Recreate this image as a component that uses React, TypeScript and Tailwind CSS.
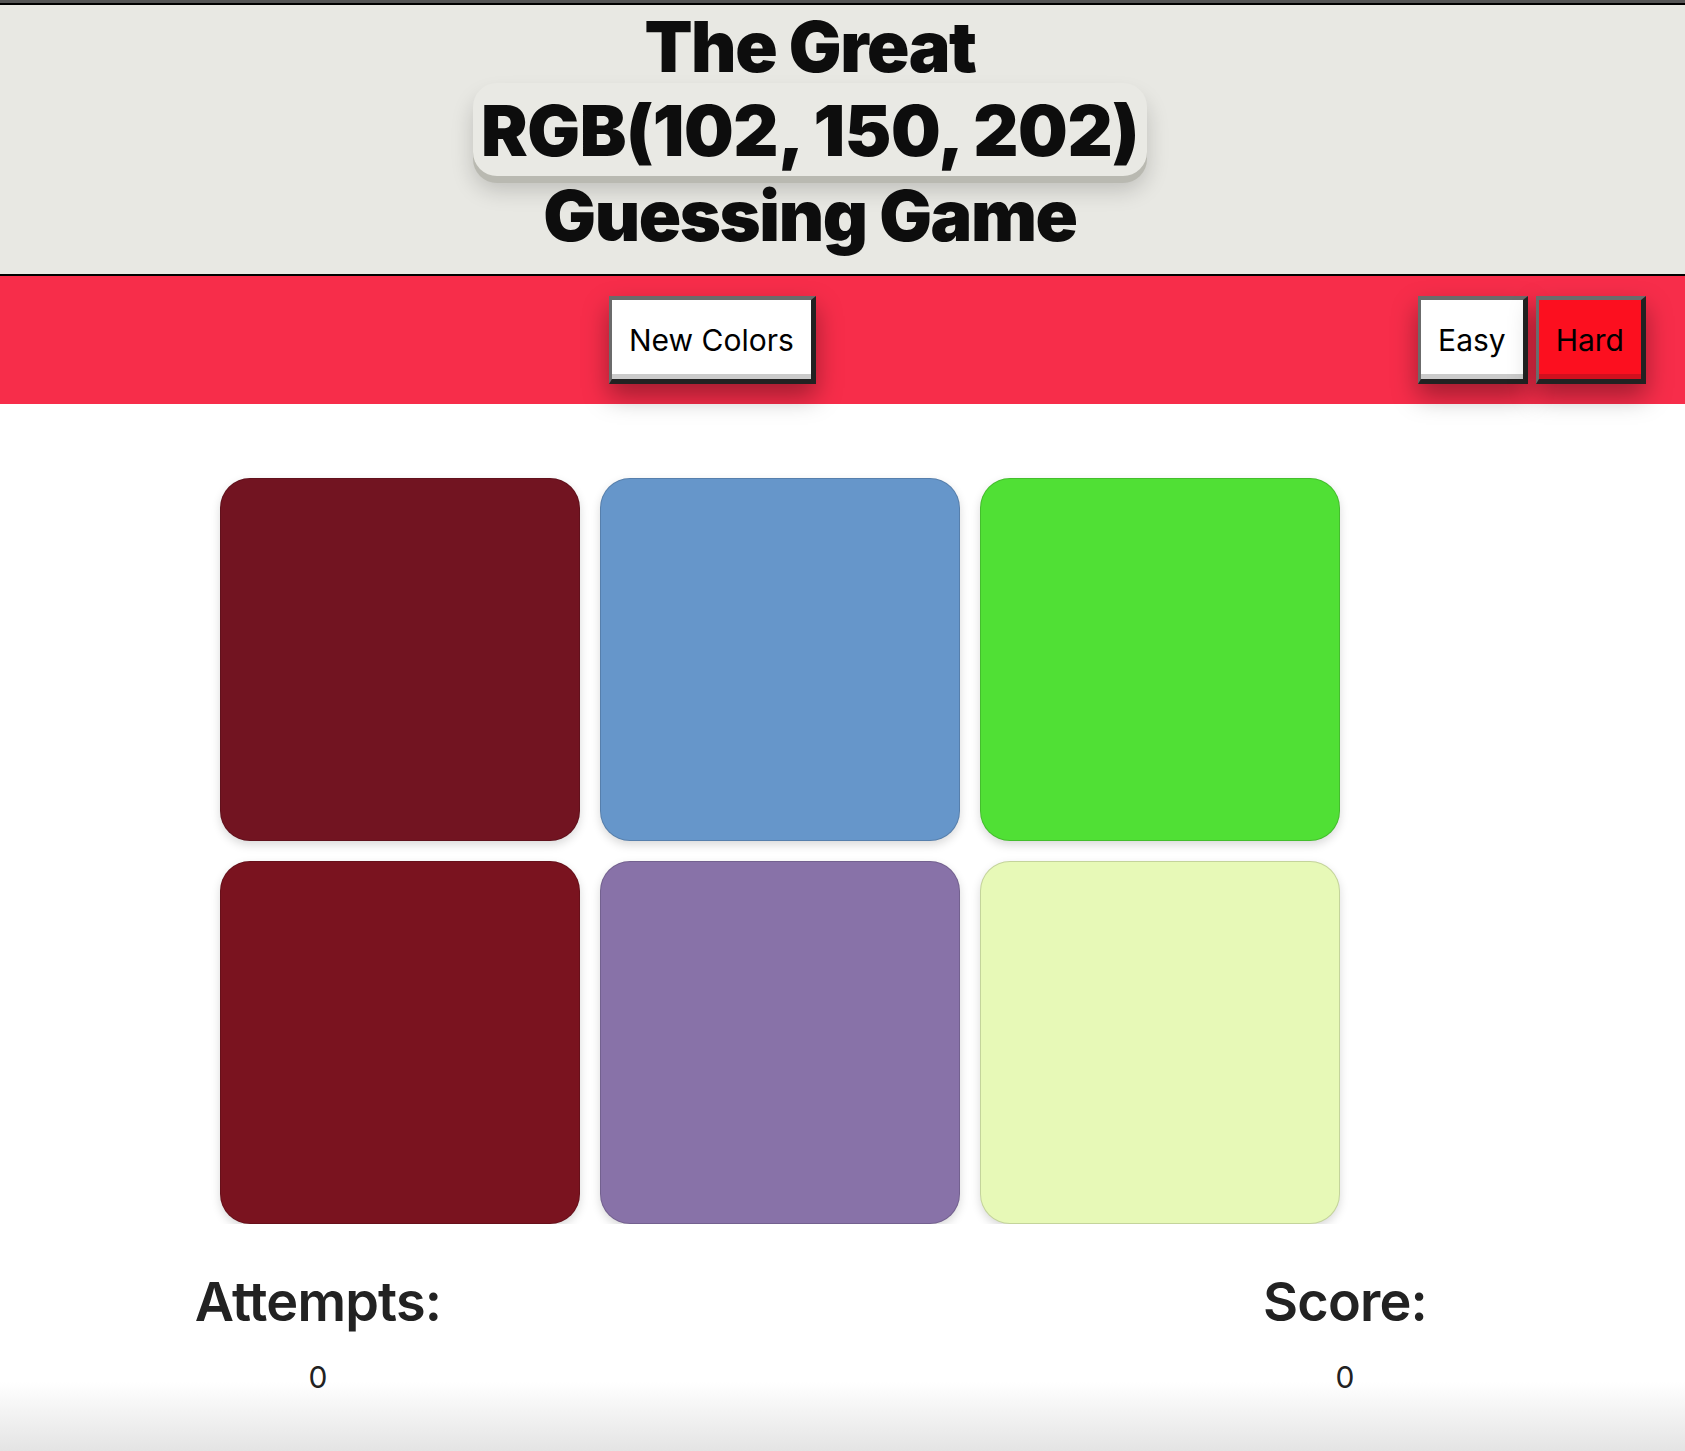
import React, { useState } from "react";

const TILES = [
  "bg-[#721421]",
  "bg-[#6696ca]",
  "bg-[#50e035]",
  "bg-[#7a131f]",
  "bg-[#8872a8]",
  "bg-[#e7f9b7]",
];

function BevelButton({
  label,
  active,
  onClick,
}: {
  label: string;
  active?: boolean;
  onClick?: () => void;
}) {
  return (
    <button
      onClick={onClick}
      className={`h-[88px] px-[17px] border-t-4 border-l-[3px] border-r-[5px] border-b-[5px] border-t-[#6b6b6b] border-l-[#6b6b6b] border-r-[#222] border-b-[#222] text-[30px] leading-none text-black ${
        active
          ? "bg-[#fc0f1f] shadow-[inset_0_-5px_0_#d0101e,0_12px_24px_rgba(0,0,0,0.35)]"
          : "bg-white shadow-[inset_0_-5px_0_#cbcbcb,0_12px_24px_rgba(0,0,0,0.35)]"
      }`}
    >
      {label}
    </button>
  );
}

export default function App() {
  const [mode, setMode] = useState("hard");
  const [attempts] = useState(0);
  const [score] = useState(0);

  return (
    <div className="min-h-[1451px] flex flex-col bg-white font-['Inter','Liberation_Sans',sans-serif]">
      <div className="h-[3px] bg-[#555]" />

      {/* Title */}
      <header className="h-[273px] border-t-2 border-b-2 border-black bg-[#e8e8e3] pr-[65px]">
        <h1 className="flex flex-col items-center font-black text-[70px] text-[#0d0d0d] tracking-[-0.02em]">
          <span className="leading-[84px]">The Great</span>
          <span className="-mt-[6px] pt-[6px] pb-[4px] px-[8px] leading-[83px] tracking-[-0.006em] rounded-[24px] bg-[#e9e9e4] shadow-[0_7px_0_#b9b9b1,0_14px_22px_rgba(0,0,0,0.18)]">
            RGB(102, 150, 202)
          </span>
          <span className="-mt-[2px] leading-[84px]">Guessing Game</span>
        </h1>
      </header>

      {/* Controls */}
      <nav className="h-[128px] flex items-center bg-[#f72d4a] pl-[609px] pr-[39px]">
        <BevelButton label="New Colors" />
        <div className="ml-auto flex gap-2">
          <BevelButton
            label="Easy"
            active={mode === "easy"}
            onClick={() => setMode("easy")}
          />
          <BevelButton
            label="Hard"
            active={mode === "hard"}
            onClick={() => setMode("hard")}
          />
        </div>
      </nav>

      {/* Color tiles */}
      <main className="pt-[74px] pl-[220px]">
        <div className="grid grid-cols-[repeat(3,360px)] gap-x-[20px] gap-y-[20px]">
          {TILES.map((c, i) => (
            <div
              key={i}
              className={`h-[363px] rounded-[30px] border border-black/15 shadow-[0_4px_10px_rgba(0,0,0,0.15)] ${c}`}
            />
          ))}
        </div>
      </main>

      {/* Stats */}
      <section className="flex-1 flex pl-[118px] pt-[45px] bg-[linear-gradient(to_bottom,#fff_0px,#fff_158px,#e4e4e4_227px)] text-[#222]">
        <div className="w-[400px] flex flex-col items-center">
          <h2 className="text-[54px] leading-[65px] font-semibold tracking-[-0.015em]">Attempts:</h2>
          <p className="mt-[25px] text-[30px] leading-[36px]">{attempts}</p>
        </div>
        <div className="ml-[627px] w-[400px] flex flex-col items-center">
          <h2 className="text-[54px] leading-[65px] font-semibold tracking-[-0.015em]">Score:</h2>
          <p className="mt-[25px] text-[30px] leading-[36px]">{score}</p>
        </div>
      </section>
    </div>
  );
}
